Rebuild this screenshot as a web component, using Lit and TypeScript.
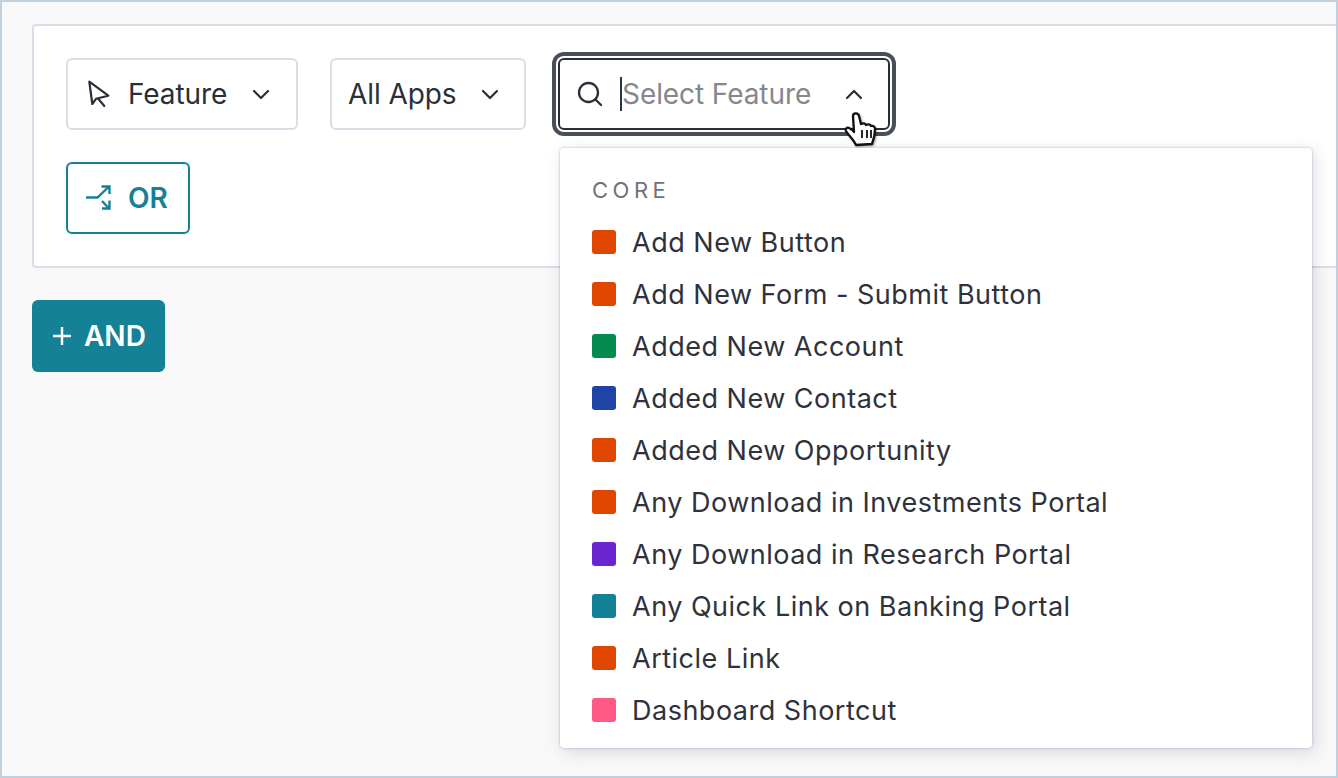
import { LitElement, html, css, svg } from "lit";
import { customElement } from "lit/decorators.js";

const ITEMS: [string, string][] = [
  ["Add New Button", "#e04600"],
  ["Add New Form - Submit Button", "#e04600"],
  ["Added New Account", "#058a50"],
  ["Added New Contact", "#1f44a6"],
  ["Added New Opportunity", "#e04600"],
  ["Any Download in Investments Portal", "#e04600"],
  ["Any Download in Research Portal", "#6a26d1"],
  ["Any Quick Link on Banking Portal", "#148196"],
  ["Article Link", "#e04600"],
  ["Dashboard Shortcut", "#ff5a85"],
];

const chevron = (d: string) => svg`<path d=${d} fill="none" stroke="currentColor" stroke-width="2.2" stroke-linecap="round" stroke-linejoin="round"/>`;

@customElement("app-root")
export class AppRoot extends LitElement {
  static styles = css`
    :host {
      display: block;
      font-family: Inter, "Liberation Sans", sans-serif;
      color: #2a2e38;
    }
    * { box-sizing: border-box; }
    .frame {
      width: 1338px;
      height: 778px;
      border: 2px solid #c0d0dc;
      background: #f8f8f8;
      padding: 22px 0 0 30px;
      overflow: hidden;
    }
    .card {
      background: #fff;
      border: 2px solid #dadce8;
      border-right: none;
      border-radius: 4px 0 0 4px;
      height: 244px;
      padding: 32px 0 0 32px;
      display: flex;
      flex-direction: column;
      gap: 32px;
    }
    .row { display: flex; gap: 32px; }
    .ctl {
      height: 72px;
      display: flex;
      align-items: center;
      background: #fff;
      border: 2px solid #dadce8;
      border-radius: 6px;
      font-size: 28px;
      letter-spacing: -0.08px;
      white-space: nowrap;
    }
    .feature { width: 232px; padding-left: 18px; }
    .feature .lbl { margin-left: 18px; }
    .feature .chev { margin-left: 22px; }
    .arrow { width: 24px; height: 28px; flex: none; display: block; }
    .apps { width: 196px; padding-left: 16px; }
    .apps .chev { margin-left: 21px; }
    .chev { width: 24px; height: 24px; flex: none; display: block; }
    .select {
      position: relative;
      width: 332px;
      padding-left: 16px;
      border: 2px solid #2a2e38;
      box-shadow: 0 0 0 2px #fff, 0 0 0 6px #4a4e5a;
    }
    .search { width: 28px; height: 28px; flex: none; display: block; }
    .caret { width: 2px; height: 34px; background: #2a3350; margin-left: 16px; flex: none; }
    .ph { color: #85878d; width: 220px; }
    .hand {
      position: absolute;
      left: 284px;
      top: 50px;
      width: 34px;
      height: 38px;
      filter: drop-shadow(1px 1px 1px rgba(0, 0, 0, 0.35));
    }
    .menu {
      position: absolute;
      left: 0;
      top: 88px;
      width: 752px;
      height: 600px;
      background: #fff;
      border-radius: 4px;
      box-shadow: 0 0 2px 1px rgba(60, 55, 110, 0.16), 3px 4px 16px rgba(60, 55, 110, 0.16);
      padding: 29px 32px 0 32px;
      letter-spacing: 0;
    }
    .head {
      font-size: 22px;
      line-height: 26px;
      letter-spacing: 4.5px;
      color: #6f7278;
      margin-bottom: 13px;
    }
    .item {
      display: flex;
      align-items: center;
      gap: 16px;
      height: 52px;
      font-size: 27px;
      letter-spacing: 0.5px;
      color: #2f323c;
    }
    .sw { width: 24px; height: 24px; border-radius: 3px; flex: none; }
    .or {
      width: 124px;
      height: 72px;
      display: flex;
      align-items: center;
      padding-left: 18px;
      gap: 16px;
      border: 2px solid #148196;
      border-radius: 6px;
      color: #148196;
      font-size: 28px;
      font-weight: 600;
    }
    .or svg { width: 26px; height: 26px; display: block; }
    .and {
      margin-top: 32px;
      width: 133px;
      height: 72px;
      display: flex;
      align-items: center;
      gap: 12px;
      padding-left: 20px;
      background: #148196;
      border-radius: 6px;
      color: #fff;
      font-size: 28px;
      font-weight: 600;
    }
    .and svg { width: 20px; height: 20px; display: block; }
  `;

  render() {
    return html`
      <div class="frame">
        <div class="card">
          <div class="row">
            <div class="ctl feature">
              <svg class="arrow" viewBox="0 0 24 28"><path d="M3.300 1.700 L6.300 24 L10 18.800 L22.300 15.700 Z M12 18.500 L18.300 26" fill="none" stroke="currentColor" stroke-width="2.200" stroke-linejoin="round" stroke-linecap="round"/></svg>
              <span class="lbl">Feature</span>
              <svg class="chev" viewBox="0 0 24 24">${chevron("M5 9l7 7 7-7")}</svg>
            </div>
            <div class="ctl apps">
              <span>All Apps</span>
              <svg class="chev" viewBox="0 0 24 24">${chevron("M5 9l7 7 7-7")}</svg>
            </div>
            <div class="ctl select">
              <svg class="search" viewBox="0 0 28 28"><circle cx="12.500" cy="12.500" r="9.500" fill="none" stroke="currentColor" stroke-width="2.300"/><path d="M19.500 19.500L25 25" stroke="currentColor" stroke-width="2.300" stroke-linecap="round"/></svg>
              <span class="caret"></span>
              <span class="ph">Select Feature</span>
              <svg class="chev" viewBox="0 0 24 24">${chevron("M5 16l7-7 7 7")}</svg>
              <svg class="hand" viewBox="0 0 34 38">
                <path d="M9 6c0-3 5-4 6 0l2 8c2-1 4-1 5 1 2-1 4-1 5 1 2-.5 4 .5 4 3 0 5-1 10-3 15l-16 1c-2-5-7-9-10-14-1-2 1-4 3-3 2 1 4 2 5 4z" fill="#fff" stroke="#111" stroke-width="2.300" stroke-linejoin="round"/>
                <path d="M18 20v8M23 20v8M27 20v8" stroke="#111" stroke-width="1.800"/>
              </svg>
              <div class="menu">
                <div class="head">CORE</div>
                ${ITEMS.map(([t, c]) => html`<div class="item"><span class="sw" style="background:${c}"></span><span>${t}</span></div>`)}
              </div>
            </div>
          </div>
          <div class="or">
            <svg viewBox="0 0 26 26"><path d="M0 12.500H11.500L23 1.500M15.500 1.500H23.500V9M16 16L23 23.500M23.500 15.500V23.500H16" fill="none" stroke="currentColor" stroke-width="2.400"/></svg>
            <span>OR</span>
          </div>
        </div>
        <div class="and">
          <svg viewBox="0 0 20 20"><path d="M10 1v18M1 10h18" stroke="currentColor" stroke-width="2.400"/></svg>
          <span>AND</span>
        </div>
      </div>
    `;
  }
}
